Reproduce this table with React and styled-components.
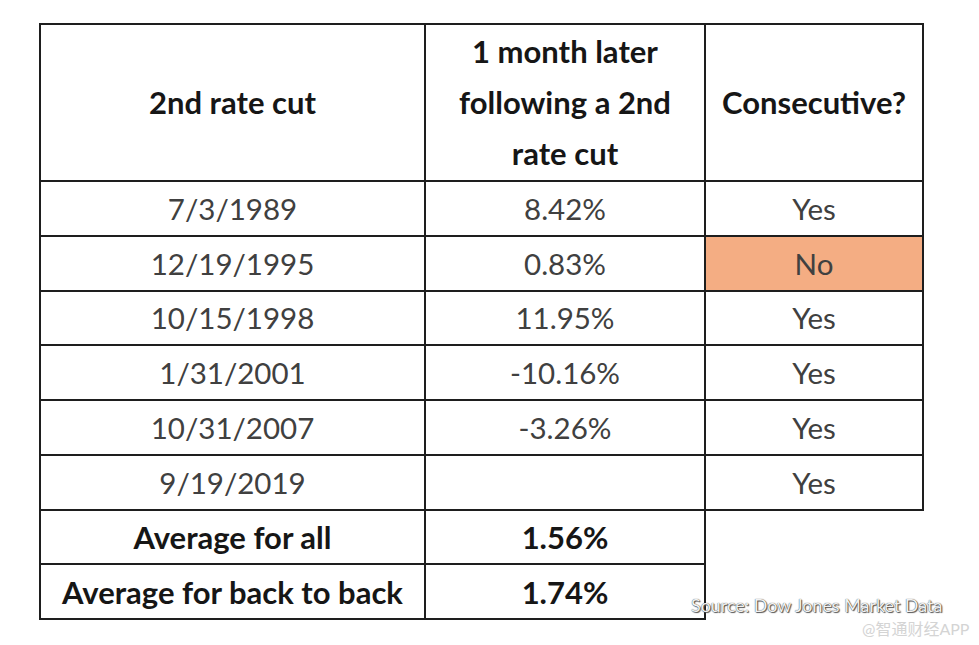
import React from 'react';
import styled, { createGlobalStyle } from 'styled-components';

const GlobalStyle = createGlobalStyle`
  html, body {
    margin: 0;
    padding: 0;
    background: #ffffff;
  }
  body {
    font-family: Lato, "Open Sans", sans-serif;
  }
`;

const Page = styled.div`
  width: 979px;
  height: 645px;
  padding: 23px 0 0 39px;
  box-sizing: border-box;
  position: relative;
  overflow: hidden;
`;

const Table = styled.table`
  border-collapse: collapse;
  table-layout: fixed;
  font-family: Lato, "Open Sans", sans-serif;
`;

const HeadCell = styled.th`
  border: 2px solid #1e1e1e;
  height: 155px;
  padding: 0 6px;
  font-size: 31px;
  font-weight: 700;
  line-height: 51px;
  color: #161616;
  text-align: center;
  vertical-align: middle;
`;

const Cell = styled.td`
  border: 2px solid #1e1e1e;
  height: 52.75px;
  padding: 0;
  font-size: ${(p) => (p.$bold ? '31px' : '29.5px')};
  font-weight: ${(p) => (p.$bold ? 700 : 400)};
  color: ${(p) => (p.$bold ? '#161616' : '#404040')};
  background: ${(p) => (p.$highlight ? '#f4ad83' : 'transparent')};
  text-align: center;
  vertical-align: middle;
`;

const Source = styled.div`
  position: absolute;
  left: 691px;
  top: 594px;
  font-family: Lato, sans-serif;
  font-size: 17.9px;
  color: #f2f2f2;
  text-shadow: 0 0 1px #222, 1px 1px 1px #555;
`;

const Watermark = styled.div`
  position: absolute;
  left: 862px;
  top: 616px;
  font-family: Lato, "Noto Sans CJK SC", sans-serif;
  font-size: 16px;
  color: #d4d4d4;
`;

const rows = [
  { date: '7/3/1989', change: '8.42%', consecutive: 'Yes' },
  { date: '12/19/1995', change: '0.83%', consecutive: 'No' },
  { date: '10/15/1998', change: '11.95%', consecutive: 'Yes' },
  { date: '1/31/2001', change: '-10.16%', consecutive: 'Yes' },
  { date: '10/31/2007', change: '-3.26%', consecutive: 'Yes' },
  { date: '9/19/2019', change: '', consecutive: 'Yes' },
];

const averages = [
  { label: 'Average for all', value: '1.56%' },
  { label: 'Average for back to back', value: '1.74%' },
];

export default function App() {
  return (
    <Page>
      <GlobalStyle />
      <Table>
        <colgroup>
          <col style={{ width: 385 }} />
          <col style={{ width: 280 }} />
          <col style={{ width: 218 }} />
        </colgroup>
        <thead>
          <tr>
            <HeadCell>2nd rate cut</HeadCell>
            <HeadCell>
              1 month later
              <br />
              following a 2nd
              <br />
              rate cut
            </HeadCell>
            <HeadCell>Consecutive?</HeadCell>
          </tr>
        </thead>
        <tbody>
          {rows.map((r) => (
            <tr key={r.date}>
              <Cell>{r.date}</Cell>
              <Cell>{r.change}</Cell>
              <Cell $highlight={r.consecutive === 'No'}>{r.consecutive}</Cell>
            </tr>
          ))}
          {averages.map((a) => (
            <tr key={a.label}>
              <Cell $bold>{a.label}</Cell>
              <Cell $bold>{a.value}</Cell>
            </tr>
          ))}
        </tbody>
      </Table>
      <Source>Source: Dow Jones Market Data</Source>
      <Watermark>@智通财经APP</Watermark>
    </Page>
  );
}
